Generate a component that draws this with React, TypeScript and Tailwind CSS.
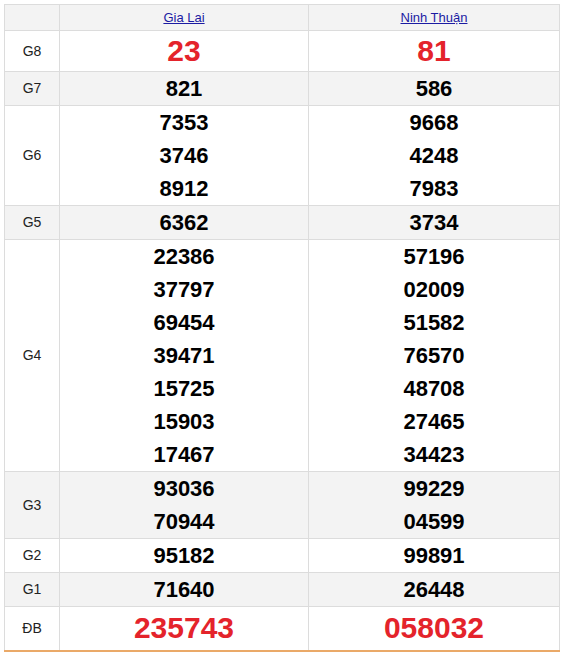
import React from "react";

type Row = {
  label: string;
  a: string[];
  b: string[];
  kind?: "big" | "normal";
};

const rows: Row[] = [
  { label: "G8", a: ["23"], b: ["81"], kind: "big" },
  { label: "G7", a: ["821"], b: ["586"] },
  { label: "G6", a: ["7353", "3746", "8912"], b: ["9668", "4248", "7983"] },
  { label: "G5", a: ["6362"], b: ["3734"] },
  {
    label: "G4",
    a: ["22386", "37797", "69454", "39471", "15725", "15903", "17467"],
    b: ["57196", "02009", "51582", "76570", "48708", "27465", "34423"],
  },
  { label: "G3", a: ["93036", "70944"], b: ["99229", "04599"] },
  { label: "G2", a: ["95182"], b: ["99891"] },
  { label: "G1", a: ["71640"], b: ["26448"] },
  { label: "ĐB", a: ["235743"], b: ["058032"], kind: "big" },
];

const Cell: React.FC<{ nums: string[]; big?: boolean }> = ({ nums, big }) => (
  <td className="border-r border-[#dcdcdc] text-center align-middle">
    {nums.map((n, i) =>
      big ? (
        <div key={i} className="text-[30px] font-bold leading-[40px] text-[#e4232b]">
          {n}
        </div>
      ) : (
        <div key={i} className="text-[22px] font-bold leading-[33px] text-black">
          {n}
        </div>
      )
    )}
  </td>
);

export default function App() {
  return (
    <div className="bg-white pl-1 pt-1 w-[563px] h-[652px] font-['Liberation_Sans',Arial,sans-serif]">
      <table className="w-[555px] border-collapse border-t border-l border-[#dcdcdc] border-b-2 border-b-[#eaa968] table-fixed">
        <colgroup>
          <col className="w-[55px]" />
          <col className="w-[249px]" />
          <col className="w-[251px]" />
        </colgroup>
        <thead>
          <tr className="bg-[#f3f3f3] h-[26px]">
            <th className="border-r border-b border-[#dcdcdc]"></th>
            <th className="border-r border-b border-[#dcdcdc] text-[13px] font-normal">
              <a className="underline text-[#1b1ba3]">Gia Lai</a>
            </th>
            <th className="border-r border-b border-[#dcdcdc] text-[13px] font-normal">
              <a className="underline text-[#1b1ba3]">Ninh Thuận</a>
            </th>
          </tr>
        </thead>
        <tbody>
          {rows.map((r, i) => (
            <tr
              key={r.label}
              className={`${i % 2 === 1 ? "bg-[#f3f3f3]" : "bg-white"} ${
                r.label === "G8" ? "h-[40px]" : r.label === "ĐB" ? "h-[44px]" : ""
              } ${i < rows.length - 1 ? "border-b border-[#dcdcdc]" : ""}`}
            >
              <td className="border-r border-[#dcdcdc] text-center text-[14px] text-[#222]">{r.label}</td>
              <Cell nums={r.a} big={r.kind === "big"} />
              <Cell nums={r.b} big={r.kind === "big"} />
            </tr>
          ))}
        </tbody>
      </table>
    </div>
  );
}
